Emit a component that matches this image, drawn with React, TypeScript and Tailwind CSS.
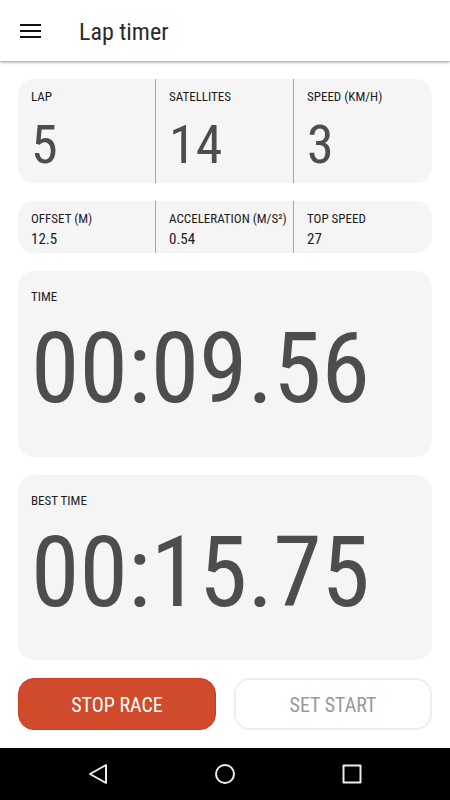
import type { ReactNode } from "react";

type Stat = { label: string; value: string };

const liveStats: Stat[] = [
  { label: "LAP", value: "5" },
  { label: "SATELLITES", value: "14" },
  { label: "SPEED (KM/H)", value: "3" },
];

const detailStats: Stat[] = [
  { label: "OFFSET (M)", value: "12.5" },
  { label: "ACCELERATION (M/S²)", value: "0.54" },
  { label: "TOP SPEED", value: "27" },
];

function StatRow({ stats, large = false }: { stats: Stat[]; large?: boolean }) {
  return (
    <dl className="grid grid-cols-3 divide-x divide-[#a6a6a6] rounded-2xl bg-[#f5f5f5]">
      {stats.map((stat) => (
        <div key={stat.label} className={large ? "pt-2 pl-[13px]" : "pt-2 pb-1 pl-[13px]"}>
          <dt className="text-[13px] leading-5 whitespace-nowrap text-[#1c1c1c]">{stat.label}</dt>
          <dd
            className={
              large
                ? "pt-1 text-[54px] leading-[68px] pb-1 text-[#4d4d4d]"
                : "text-[15px] leading-5 text-[#1c1c1c]"
            }
          >
            {stat.value}
          </dd>
        </div>
      ))}
    </dl>
  );
}

function TimeCard({ label, time }: { label: string; time: string }) {
  return (
    <section className="flex-1 rounded-2xl bg-[#f5f5f5] px-[13px] pt-4">
      <h2 className="text-[13px] leading-5 text-[#1c1c1c]">{label}</h2>
      <p className="pt-1 text-[98px] leading-[116px] text-[#4d4d4d]">{time}</p>
    </section>
  );
}

function NavButton({ label, children }: { label: string; children: ReactNode }) {
  return (
    <button type="button" aria-label={label} className="flex h-[52px] justify-center pt-[14px]">
      <svg width="24" height="24" viewBox="0 0 24 24" fill="none" stroke="#ececec" strokeWidth="2" strokeLinejoin="round">
        {children}
      </svg>
    </button>
  );
}

export default function App() {
  return (
    <div className="flex min-h-screen flex-col bg-white font-['Roboto_Condensed','Roboto',sans-serif]">
      <header className="flex h-[61px] items-center gap-9 pl-[18px] shadow-[0_1px_3px_rgba(0,0,0,0.45)]">
        <button type="button" aria-label="Open menu">
          <svg width="25" height="24" viewBox="0 0 25 24" fill="none" stroke="#111111" strokeWidth="2">
            <path d="M2 6h21M2 12h21M2 18h21" />
          </svg>
        </button>
        <h1 className="pt-0.5 text-2xl text-[#2b2b2b]">Lap timer</h1>
      </header>

      <main className="flex flex-1 flex-col gap-[18px] p-[18px]">
        <StatRow stats={liveStats} large />
        <StatRow stats={detailStats} />
        <TimeCard label="TIME" time="00:09.56" />
        <TimeCard label="BEST TIME" time="00:15.75" />
        <div className="grid grid-cols-2 gap-[18px]">
          <button type="button" className="h-[52px] rounded-2xl border border-[#cb3c20] bg-[#d04b2b] pt-0.5 text-xl text-white">
            STOP RACE
          </button>
          <button type="button" className="h-[52px] rounded-2xl border-2 border-[#eeeeee] bg-white pt-0.5 text-xl text-[#999999]">
            SET START
          </button>
        </div>
      </main>

      <nav aria-label="System navigation" className="flex justify-center bg-black">
        <div className="grid w-[381px] grid-cols-3">
          <NavButton label="Back">
            <path d="M20 3v18L4 12z" />
          </NavButton>
          <NavButton label="Home">
            <circle cx="12" cy="12" r="9" />
          </NavButton>
          <NavButton label="Recent apps">
            <rect x="3.5" y="3.5" width="17" height="17" />
          </NavButton>
        </div>
      </nav>
    </div>
  );
}
